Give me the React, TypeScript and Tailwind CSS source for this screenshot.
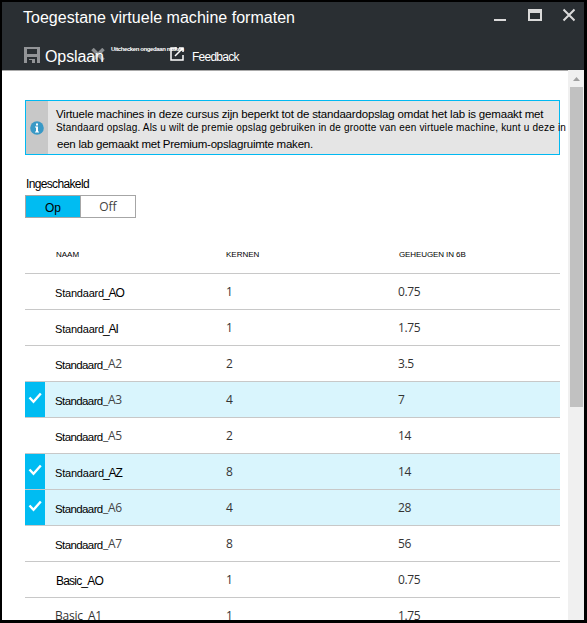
import React from "react";

type Row = { head: string; tail: string; dark?: boolean; cores: string; memory: string; on?: boolean };

const rows: Row[] = [
  { head: "Standaard", tail: "_AO", dark: true, cores: "1", memory: "0.75" },
  { head: "Standaard", tail: "_AI", dark: true, cores: "1", memory: "1.75" },
  { head: "Standaard", tail: "_A2", cores: "2", memory: "3.5" },
  { head: "Standaard", tail: "_A3", cores: "4", memory: "7", on: true },
  { head: "Standaard", tail: "_A5", cores: "2", memory: "14" },
  { head: "Standaard", tail: "_AZ", dark: true, cores: "8", memory: "14", on: true },
  { head: "Standaard", tail: "_A6", cores: "4", memory: "28", on: true },
  { head: "Standaard", tail: "_A7", cores: "8", memory: "56" },
  { head: "Basic", tail: "_AO", dark: true, cores: "1", memory: "0.75" },
  { head: "Basic", tail: "_A1", cores: "1", memory: "1.75" },
];

const segoe = "font-['Open_Sans','Noto_Sans',sans-serif]";

function Name({ row, last }: { row: Row; last: boolean }) {
  if (row.head === "Basic") {
    return last ? (
      <span className={`${segoe} text-[12px] tracking-[-0.2px] text-[#333]`}>Basic_A1</span>
    ) : (
      <span className="pl-px pt-[3px] text-[12px] tracking-[-0.8px]">Basic_AO</span>
    );
  }
  return (
    <span className={row.dark ? "flex items-baseline pt-[3px]" : "flex items-start pt-[3px]"}>
      <span className={row.dark ? "w-[48px] text-[11px] tracking-[-0.2px]" : "w-[48px] text-[11.5px] leading-[18px] tracking-[-0.6px]"}>
        {row.head}
      </span>
      {row.dark ? (
        <span className="text-[12px] tracking-[-1.1px]">{row.tail}</span>
      ) : (
        <span className={`${segoe} -mt-px text-[12px] leading-[17px] tracking-[-0.3px] text-[#444]`}>{row.tail}</span>
      )}
    </span>
  );
}

function Header() {
  return (
    <header className="h-[68px] shrink-0 bg-[#2a2f33] text-white">
      <div className="flex h-[36px] justify-between pl-[21px] pr-[9px]">
        <h1 className="pt-[6px] text-[16px] leading-[20px] tracking-[0.02px]">Toegestane virtuele machine formaten</h1>
        <svg className="mt-[6px]" width="82" height="14" viewBox="0 0 82 14" fill="none" stroke="#dadada">
          <path d="M1 12h12" strokeWidth="2" />
          <path d="M35 1h14v12H35z M37 5h10v6H37z" fill="#dadada" fillRule="evenodd" stroke="none" />
          <path d="M70.500 1.500l11 11M81.500 1.500l-11 11" strokeWidth="2" />
        </svg>
      </div>
      <div className="flex h-[32px] pl-[22px]">
        <svg className="mt-[9px] shrink-0" width="16" height="16" viewBox="0 0 16 16">
          <path fill="#929497" fillRule="evenodd" d="M0 0h16v16H0zM3 2v5h10V2zM3 10v6h2v-4h8v-2zM5 13h3v3H5zM11 12h2v4h-2z" />
        </svg>
        <span className="relative z-10 ml-[5px] w-[46px] shrink-0 whitespace-nowrap pt-[9px] text-[16px] leading-[20px] tracking-[-0.1px]">Opslaan</span>
        <svg className="mt-[10px] shrink-0" width="14" height="13" viewBox="0 0 14 13" stroke="#8b8e91" strokeWidth="3.500">
          <path d="M1.500 1l11 11M12.500 1l-11 11" />
        </svg>
        <span className="ml-[6px] w-[59px] shrink-0 whitespace-nowrap pt-[7px] text-[6px] font-bold leading-[8px] tracking-[-0.4px]">Uitchecken ongedaan maken</span>
        <svg className="mt-[9px] shrink-0" width="14" height="14" viewBox="0 0 14 14" fill="none" stroke="white" strokeWidth="1.500">
          <path d="M7 1H1v12h12V8M9 1h4v4M12.500 1.500L5 9" />
        </svg>
        <span className="ml-[8px] pt-[11px] text-[12px] leading-[16px] tracking-[-0.75px]">Feedback</span>
      </div>
    </header>
  );
}

function Notice() {
  return (
    <div className="flex h-[55px] w-[535px] border border-[#00b9f2] bg-[#e5e5e5]">
      <div className="flex w-[22px] shrink-0 items-center justify-center bg-[#c8c8c8]">
        <svg width="14" height="14" viewBox="0 0 14 14">
          <circle cx="7" cy="7" r="6.800" fill="#3999c6" />
          <path fill="#fff" d="M6 2.500h2v2H6zM5 5.500h3v5h1v1H5v-1h1v-4H5z" />
        </svg>
      </div>
      <div className="w-0 whitespace-nowrap pl-[8px] pt-[5px] text-[11.5px]">
        <p className="h-[14px] leading-[16px] tracking-[-0.18px]">Virtuele machines in deze cursus zijn beperkt tot de standaardopslag omdat het lab is gemaakt met</p>
        <p className="h-[15px] text-[10px] leading-[16px] tracking-[0.19px]">Standaard opslag. Als u wilt de premie opslag gebruiken in de grootte van een virtuele machine, kunt u deze in</p>
        <p className="pl-px leading-[18px] tracking-[-0.24px]">een lab gemaakt met Premium-opslagruimte maken.</p>
      </div>
    </div>
  );
}

export default function App() {
  return (
    <div className="flex h-[623px] w-[587px] flex-col overflow-hidden border-2 border-b-[3px] border-r-[3px] border-black bg-white font-['Liberation_Sans',Arial,sans-serif] text-black">
      <Header />
      <div className="flex min-h-0 flex-1">
        <main className="w-[566px] overflow-hidden border-t border-[#aaa] pl-[23px] pt-[29px]">
          <Notice />
          <div className="pl-px pt-[21px] text-[12px] leading-[16px] tracking-[-0.65px]">Ingeschakeld</div>
          <div className="mt-[3px] flex h-[23px] w-[111px] border border-[#a6a6a6] text-[12px] leading-[24px]">
            <div className="w-[55px] border-r border-[#a6a6a6] bg-[#00bcf2] text-center">Op</div>
            <div className={`${segoe} flex-1 text-center leading-[22px] text-[#444]`}>Off</div>
          </div>
          <div className="flex h-[56px] w-[535px] border-b border-[#c8c8c8] pl-[31px] pt-[31px] text-[8px] leading-[11px]">
            <span className="w-[170px]">NAAM</span>
            <span className="w-[173px]">KERNEN</span>
            <span className="tracking-[-0.1px]">GEHEUGEN IN 6B</span>
          </div>
          {rows.map((row, i) => (
            <div key={i} className={`flex h-[36px] w-[535px] items-center border-b border-[#c8c8c8] ${row.on ? "bg-[#d9f5fd]" : ""}`}>
              <div className={`flex h-full w-[20px] items-center justify-center pb-[3px] ${row.on ? "bg-[#00bcf2]" : ""}`}>
                {row.on && (
                  <svg width="14" height="12" viewBox="0 0 14 12" fill="none" stroke="white" strokeWidth="2.400">
                    <path d="M1.500 5.500L5.500 9.800L12.800 1.500" />
                  </svg>
                )}
              </div>
              <div className="flex w-[181px] pl-[10px]">
                <Name row={row} last={i === rows.length - 1} />
              </div>
              <div className={`${segoe} w-[172px] text-[12px] text-[#333]`}>{row.cores}</div>
              <div className={`${segoe} text-[12px] tracking-[-0.4px] text-[#333]`}>{row.memory}</div>
            </div>
          ))}
        </main>
        <div className="flex w-[16px] flex-col bg-[#f0f0f0] pl-[2px] pr-px">
          <svg className="h-[17px] w-[13px]" viewBox="0 0 13 17">
            <path fill="#a0a0a0" d="M3 11L6.500 7L10 11z" />
          </svg>
          <div className="h-[320px] bg-[#c1c1c1]" />
        </div>
      </div>
    </div>
  );
}
